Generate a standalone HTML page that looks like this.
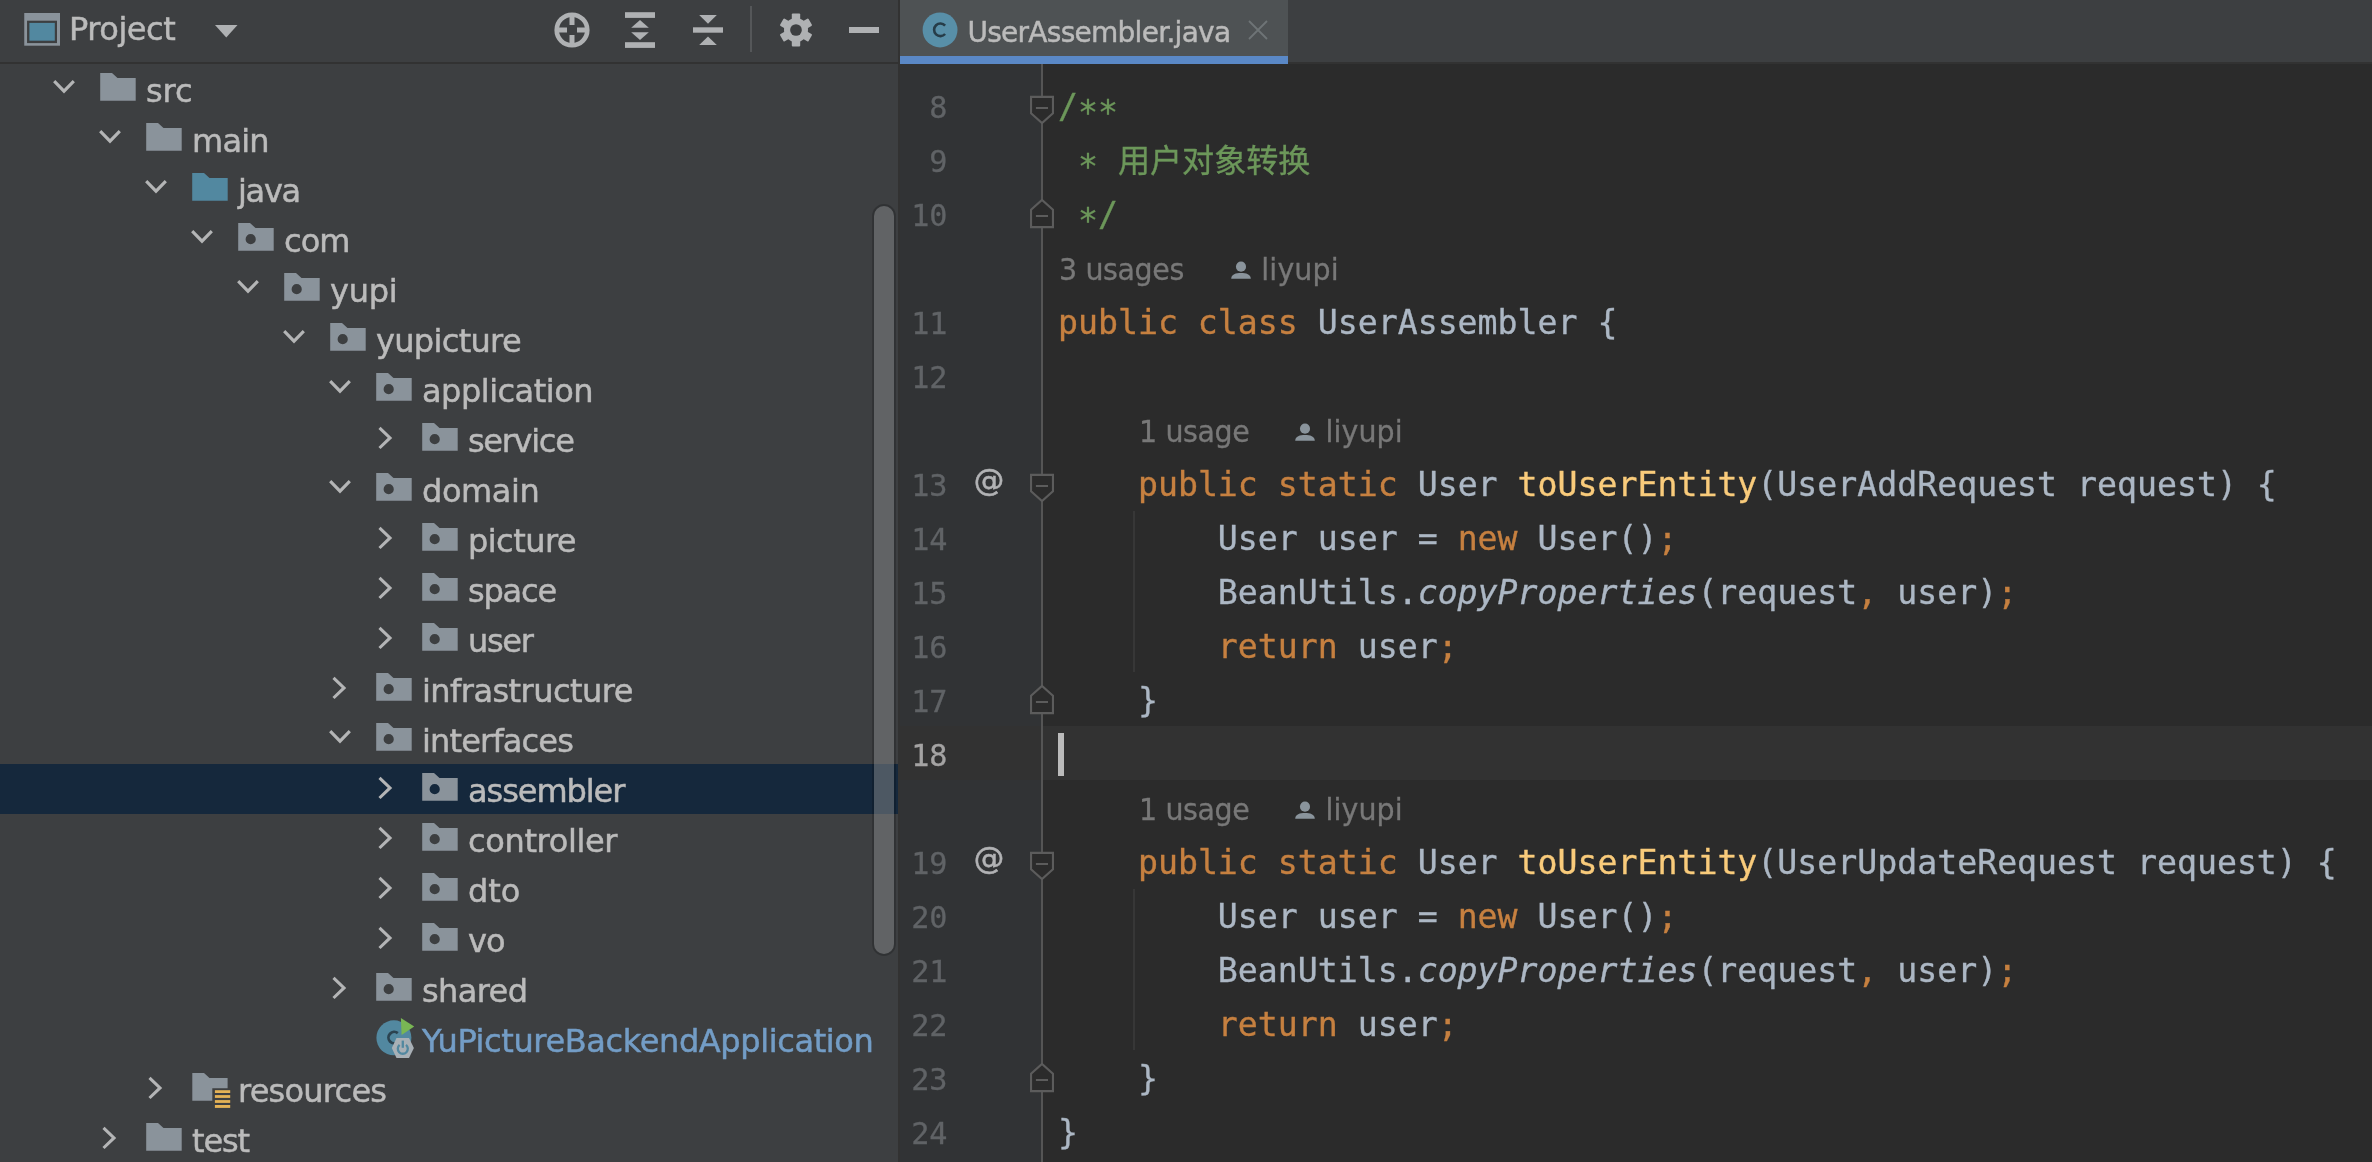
<!DOCTYPE html>
<html lang="en">
<head>
<meta charset="utf-8">
<title>UserAssembler.java</title>
<style>
*{box-sizing:border-box;margin:0;padding:0}
html,body{width:2372px;height:1162px;overflow:hidden;background:#2b2b2b}
body{position:relative;font-family:"DejaVu Sans", "Liberation Sans", "Noto Sans CJK SC", sans-serif;color:#bbbbbb;-webkit-font-smoothing:antialiased}
#root{position:absolute;left:0;top:0;width:2372px;height:1162px;will-change:transform}
.abs{position:absolute}
#panel{position:absolute;left:0;top:0;width:898px;height:1162px;background:#3d3f41;overflow:hidden}
#phead{position:absolute;left:0;top:0;width:898px;height:62px;background:#3d3f41}
#pborder{position:absolute;left:0;top:62px;width:898px;height:2px;background:#323232}
#divider{position:absolute;left:898px;top:0;width:2px;height:1162px;background:#323232}
#ptitle{-webkit-text-stroke:0.5px;position:absolute;left:69px;top:9px;font-size:32px;line-height:40px;letter-spacing:-0.45px;color:#bbbbbb;white-space:nowrap}
.row{position:absolute;left:0;width:898px;height:50px}
#selrow{position:absolute;left:0;top:764px;width:898px;height:50px;background:#15283c}
.row span{position:absolute;display:block}
.row .i{top:8px}
.row .ico{position:absolute;left:0;top:0}
.row .arw{position:absolute;left:0;top:0}
.row .t{-webkit-text-stroke:0.5px;top:4px;font-size:32px;line-height:44px;white-space:nowrap;color:#bbbbbb}
.row .t.link{color:#739dc6}
#sb{position:absolute;left:874px;top:206px;width:20px;height:747.6px;border-radius:10px;background:rgba(134,136,138,0.5);box-shadow:0 0 0 1.9px rgba(0,0,0,0.2)}
#tabs{position:absolute;left:900px;top:0;width:1472px;height:62px;background:#3d3f41}
#tabsb{position:absolute;left:900px;top:62px;width:1472px;height:2px;background:#323232}
#tab{position:absolute;left:900px;top:0;width:388px;height:56px;background:#4e5254}
#tabul{position:absolute;left:900px;top:56px;width:388px;height:8px;background:#5a88c6}
#tabt{-webkit-text-stroke:0.45px;position:absolute;left:967.4px;top:13.2px;font-size:28px;line-height:40px;letter-spacing:-0.72px;color:#bbbbbb;white-space:nowrap}
#gutter{position:absolute;left:900px;top:64px;width:141px;height:1098px;background:#313335}
#foldline{z-index:1;position:absolute;left:1041px;top:64px;width:2px;height:1098px;background:#555555}
.ln{-webkit-text-stroke:0.3px;position:absolute;left:900px;width:47.5px;height:54px;line-height:54px;text-align:right;font-family:"DejaVu Sans Mono", "Liberation Mono", "Noto Sans CJK SC", monospace;font-size:30.2px;color:#606366;white-space:pre}
.ln.cur{color:#a4a3a3}
.cl{-webkit-text-stroke:0.35px;position:absolute;left:1058px;height:54px;line-height:54px;font-family:"DejaVu Sans Mono", "Liberation Mono", "Noto Sans CJK SC", monospace;font-size:33.2px;color:#acb7c4;white-space:pre;margin:0}
.as{position:relative;top:6px}.cjk{font-size:32.1px}
.k{color:#c68040}.p{color:#acb7c4}.f{color:#f9cb7b}.cm{color:#6c975a}.it{font-style:italic;color:#acb7c4}
.curline{position:absolute;left:900px;width:1472px;height:54px;background:#323232}
.caret{position:absolute;left:1058px;width:6px;height:43px;background:#bbbbbb}
.fm{z-index:2;position:absolute;left:1028px;width:28px;height:34px}
.fm svg{display:block}
.at{-webkit-text-stroke:0.55px;position:absolute;left:970px;width:38px;height:54px;line-height:50px;text-align:center;font-size:30.5px;color:#b2b3b5;font-family:"DejaVu Sans", "Liberation Sans", "Noto Sans CJK SC", sans-serif}
.hint{-webkit-text-stroke:0.3px;position:absolute;height:54px;line-height:54px;font-size:28.5px;color:#787878;white-space:nowrap;letter-spacing:-0.4px}
.hint .person{display:inline-block;vertical-align:-2.2px;margin:0 9px 0 45px}
.hint .ha{letter-spacing:0.1px}
.hint .hu,.hint .ha{display:inline-block;transform:scaleY(1.075);transform-origin:0 68.2%}
.hint.first .person{margin-left:46.5px}
.guide{position:absolute;left:1133px;width:2px;background:#373737}
</style>
</head>
<body>
<div id="root">
<div id="panel">
<div id="phead">
<svg class="abs" style="left:24px;top:13px" width="36" height="33" viewBox="0 0 36 33"><rect x="0.25" y="0" width="35.75" height="32.7" fill="#8a939b"/><rect x="3.05" y="7.7" width="29.95" height="22.4" fill="#3d3f41"/><rect x="5.4" y="9.9" width="25.4" height="17.8" fill="#5288a0"/></svg>
<div id="ptitle">Project</div>
<svg class="abs" style="left:215px;top:25px" width="23" height="13" viewBox="0 0 23 13"><path d="M0 0H22.5L11.25 12.5Z" fill="#afb1b3"/></svg>
<svg class="abs" style="left:553px;top:11px" width="38" height="38" viewBox="0 0 38 38"><circle cx="19" cy="19" r="15.3" fill="none" stroke="#afb1b3" stroke-width="4.6"/><path d="M19 3V14M19 24V35M3 19H14M24 19H35" stroke="#afb1b3" stroke-width="5" fill="none"/></svg>
<svg class="abs" style="left:624px;top:12px" width="32" height="36" viewBox="0 0 32 36"><g fill="#afb1b3"><rect x="1" y="0.2" width="30" height="5.7"/><rect x="1" y="30.2" width="30" height="5.7"/><path d="M16 8L24.8 15.8H7.2Z"/><path d="M16 28L24.8 20.2H7.2Z"/></g></svg>
<svg class="abs" style="left:692px;top:14px" width="32" height="32" viewBox="0 0 32 32"><g fill="#afb1b3"><rect x="1" y="13.3" width="30" height="5.4"/><path d="M16 9.8L24.8 1H7.2Z"/><path d="M16 22.6L24.8 31H7.2Z"/></g></svg>
<div class="abs" style="left:750px;top:6px;width:2px;height:46px;background:#555759"></div>
<svg class="abs" style="left:778px;top:12px" width="36" height="36" viewBox="-18 -18 36 36"><g fill="#afb1b3"><circle r="12"/><g id="teeth"><rect x="-4.2" y="-16.4" width="8.4" height="32.8" rx="1"/><rect x="-4.2" y="-16.4" width="8.4" height="32.8" rx="1" transform="rotate(60)"/><rect x="-4.2" y="-16.4" width="8.4" height="32.8" rx="1" transform="rotate(120)"/></g></g><circle r="5.85" fill="#3d3f41"/></svg>
<div class="abs" style="left:849px;top:27.1px;width:30.2px;height:5.7px;background:#afb1b3"></div>
</div>
<div id="pborder"></div>
<div id="selrow"></div>
<div class="row" style="top:65px"><span class="a" style="left:50.7px;top:13px"><svg class="arw" width="26" height="18" viewBox="0 0 26 18"><path d="M3.2 3.2L13 13.2L22.8 3.2" fill="none" stroke="#b4b5b6" stroke-width="3.1"/></svg></span><span class="i" style="left:100px"><svg class="ico" width="36" height="28" viewBox="0 0 36 28"><path d="M0.2 0H12L17.5 4.9H35.7V27.8H0.2Z" fill="#8a939b"/></svg></span><span class="t" style="left:146px;letter-spacing:-0.1px">src</span></div>
<div class="row" style="top:115px"><span class="a" style="left:96.7px;top:13px"><svg class="arw" width="26" height="18" viewBox="0 0 26 18"><path d="M3.2 3.2L13 13.2L22.8 3.2" fill="none" stroke="#b4b5b6" stroke-width="3.1"/></svg></span><span class="i" style="left:146px"><svg class="ico" width="36" height="28" viewBox="0 0 36 28"><path d="M0.2 0H12L17.5 4.9H35.7V27.8H0.2Z" fill="#8a939b"/></svg></span><span class="t" style="left:192px;letter-spacing:-0.767px">main</span></div>
<div class="row" style="top:165px"><span class="a" style="left:142.7px;top:13px"><svg class="arw" width="26" height="18" viewBox="0 0 26 18"><path d="M3.2 3.2L13 13.2L22.8 3.2" fill="none" stroke="#b4b5b6" stroke-width="3.1"/></svg></span><span class="i" style="left:192px"><svg class="ico" width="36" height="28" viewBox="0 0 36 28"><path d="M0.2 0H12L17.5 4.9H35.7V27.8H0.2Z" fill="#5288a0"/></svg></span><span class="t" style="left:238px;letter-spacing:-1.3px">java</span></div>
<div class="row" style="top:215px"><span class="a" style="left:188.7px;top:13px"><svg class="arw" width="26" height="18" viewBox="0 0 26 18"><path d="M3.2 3.2L13 13.2L22.8 3.2" fill="none" stroke="#b4b5b6" stroke-width="3.1"/></svg></span><span class="i" style="left:238px"><svg class="ico" width="36" height="28" viewBox="0 0 36 28"><path fill-rule="evenodd" d="M0.2 0H12L17.5 4.9H35.7V27.8H0.2ZM17.8 16.2a5.1 5.1 0 1 0 -10.2 0a5.1 5.1 0 1 0 10.2 0Z" fill="#8a939b"/></svg></span><span class="t" style="left:284px;letter-spacing:-0.9px">com</span></div>
<div class="row" style="top:265px"><span class="a" style="left:234.7px;top:13px"><svg class="arw" width="26" height="18" viewBox="0 0 26 18"><path d="M3.2 3.2L13 13.2L22.8 3.2" fill="none" stroke="#b4b5b6" stroke-width="3.1"/></svg></span><span class="i" style="left:284px"><svg class="ico" width="36" height="28" viewBox="0 0 36 28"><path fill-rule="evenodd" d="M0.2 0H12L17.5 4.9H35.7V27.8H0.2ZM17.8 16.2a5.1 5.1 0 1 0 -10.2 0a5.1 5.1 0 1 0 10.2 0Z" fill="#8a939b"/></svg></span><span class="t" style="left:330px;letter-spacing:-0.233px">yupi</span></div>
<div class="row" style="top:315px"><span class="a" style="left:280.7px;top:13px"><svg class="arw" width="26" height="18" viewBox="0 0 26 18"><path d="M3.2 3.2L13 13.2L22.8 3.2" fill="none" stroke="#b4b5b6" stroke-width="3.1"/></svg></span><span class="i" style="left:330px"><svg class="ico" width="36" height="28" viewBox="0 0 36 28"><path fill-rule="evenodd" d="M0.2 0H12L17.5 4.9H35.7V27.8H0.2ZM17.8 16.2a5.1 5.1 0 1 0 -10.2 0a5.1 5.1 0 1 0 10.2 0Z" fill="#8a939b"/></svg></span><span class="t" style="left:376px;letter-spacing:-0.6755px">yupicture</span></div>
<div class="row" style="top:365px"><span class="a" style="left:326.7px;top:13px"><svg class="arw" width="26" height="18" viewBox="0 0 26 18"><path d="M3.2 3.2L13 13.2L22.8 3.2" fill="none" stroke="#b4b5b6" stroke-width="3.1"/></svg></span><span class="i" style="left:376px"><svg class="ico" width="36" height="28" viewBox="0 0 36 28"><path fill-rule="evenodd" d="M0.2 0H12L17.5 4.9H35.7V27.8H0.2ZM17.8 16.2a5.1 5.1 0 1 0 -10.2 0a5.1 5.1 0 1 0 10.2 0Z" fill="#8a939b"/></svg></span><span class="t" style="left:422px;letter-spacing:-0.5px">application</span></div>
<div class="row" style="top:415px"><span class="a" style="left:375.5px;top:9.8px"><svg class="arw r" width="18" height="26" viewBox="0 0 18 26"><path d="M3.5 2.8L14 12.9L3.5 23" fill="none" stroke="#b4b5b6" stroke-width="3.1"/></svg></span><span class="i" style="left:422px"><svg class="ico" width="36" height="28" viewBox="0 0 36 28"><path fill-rule="evenodd" d="M0.2 0H12L17.5 4.9H35.7V27.8H0.2ZM17.8 16.2a5.1 5.1 0 1 0 -10.2 0a5.1 5.1 0 1 0 10.2 0Z" fill="#8a939b"/></svg></span><span class="t" style="left:468px;letter-spacing:-1.3px">service</span></div>
<div class="row" style="top:465px"><span class="a" style="left:326.7px;top:13px"><svg class="arw" width="26" height="18" viewBox="0 0 26 18"><path d="M3.2 3.2L13 13.2L22.8 3.2" fill="none" stroke="#b4b5b6" stroke-width="3.1"/></svg></span><span class="i" style="left:376px"><svg class="ico" width="36" height="28" viewBox="0 0 36 28"><path fill-rule="evenodd" d="M0.2 0H12L17.5 4.9H35.7V27.8H0.2ZM17.8 16.2a5.1 5.1 0 1 0 -10.2 0a5.1 5.1 0 1 0 10.2 0Z" fill="#8a939b"/></svg></span><span class="t" style="left:422px;letter-spacing:-0.4px">domain</span></div>
<div class="row" style="top:515px"><span class="a" style="left:375.5px;top:9.8px"><svg class="arw r" width="18" height="26" viewBox="0 0 18 26"><path d="M3.5 2.8L14 12.9L3.5 23" fill="none" stroke="#b4b5b6" stroke-width="3.1"/></svg></span><span class="i" style="left:422px"><svg class="ico" width="36" height="28" viewBox="0 0 36 28"><path fill-rule="evenodd" d="M0.2 0H12L17.5 4.9H35.7V27.8H0.2ZM17.8 16.2a5.1 5.1 0 1 0 -10.2 0a5.1 5.1 0 1 0 10.2 0Z" fill="#8a939b"/></svg></span><span class="t" style="left:468px;letter-spacing:-0.55px">picture</span></div>
<div class="row" style="top:565px"><span class="a" style="left:375.5px;top:9.8px"><svg class="arw r" width="18" height="26" viewBox="0 0 18 26"><path d="M3.5 2.8L14 12.9L3.5 23" fill="none" stroke="#b4b5b6" stroke-width="3.1"/></svg></span><span class="i" style="left:422px"><svg class="ico" width="36" height="28" viewBox="0 0 36 28"><path fill-rule="evenodd" d="M0.2 0H12L17.5 4.9H35.7V27.8H0.2ZM17.8 16.2a5.1 5.1 0 1 0 -10.2 0a5.1 5.1 0 1 0 10.2 0Z" fill="#8a939b"/></svg></span><span class="t" style="left:468px;letter-spacing:-1.2px">space</span></div>
<div class="row" style="top:615px"><span class="a" style="left:375.5px;top:9.8px"><svg class="arw r" width="18" height="26" viewBox="0 0 18 26"><path d="M3.5 2.8L14 12.9L3.5 23" fill="none" stroke="#b4b5b6" stroke-width="3.1"/></svg></span><span class="i" style="left:422px"><svg class="ico" width="36" height="28" viewBox="0 0 36 28"><path fill-rule="evenodd" d="M0.2 0H12L17.5 4.9H35.7V27.8H0.2ZM17.8 16.2a5.1 5.1 0 1 0 -10.2 0a5.1 5.1 0 1 0 10.2 0Z" fill="#8a939b"/></svg></span><span class="t" style="left:468px;letter-spacing:-1.333px">user</span></div>
<div class="row" style="top:665px"><span class="a" style="left:329.5px;top:9.8px"><svg class="arw r" width="18" height="26" viewBox="0 0 18 26"><path d="M3.5 2.8L14 12.9L3.5 23" fill="none" stroke="#b4b5b6" stroke-width="3.1"/></svg></span><span class="i" style="left:376px"><svg class="ico" width="36" height="28" viewBox="0 0 36 28"><path fill-rule="evenodd" d="M0.2 0H12L17.5 4.9H35.7V27.8H0.2ZM17.8 16.2a5.1 5.1 0 1 0 -10.2 0a5.1 5.1 0 1 0 10.2 0Z" fill="#8a939b"/></svg></span><span class="t" style="left:422px;letter-spacing:-0.546px">infrastructure</span></div>
<div class="row" style="top:715px"><span class="a" style="left:326.7px;top:13px"><svg class="arw" width="26" height="18" viewBox="0 0 26 18"><path d="M3.2 3.2L13 13.2L22.8 3.2" fill="none" stroke="#b4b5b6" stroke-width="3.1"/></svg></span><span class="i" style="left:376px"><svg class="ico" width="36" height="28" viewBox="0 0 36 28"><path fill-rule="evenodd" d="M0.2 0H12L17.5 4.9H35.7V27.8H0.2ZM17.8 16.2a5.1 5.1 0 1 0 -10.2 0a5.1 5.1 0 1 0 10.2 0Z" fill="#8a939b"/></svg></span><span class="t" style="left:422px;letter-spacing:-0.833px">interfaces</span></div>
<div class="row sel" style="top:765px"><span class="a" style="left:375.5px;top:9.8px"><svg class="arw r" width="18" height="26" viewBox="0 0 18 26"><path d="M3.5 2.8L14 12.9L3.5 23" fill="none" stroke="#b4b5b6" stroke-width="3.1"/></svg></span><span class="i" style="left:422px"><svg class="ico" width="36" height="28" viewBox="0 0 36 28"><path fill-rule="evenodd" d="M0.2 0H12L17.5 4.9H35.7V27.8H0.2ZM17.8 16.2a5.1 5.1 0 1 0 -10.2 0a5.1 5.1 0 1 0 10.2 0Z" fill="#8a939b"/></svg></span><span class="t" style="left:468px;letter-spacing:-1.062px">assembler</span></div>
<div class="row" style="top:815px"><span class="a" style="left:375.5px;top:9.8px"><svg class="arw r" width="18" height="26" viewBox="0 0 18 26"><path d="M3.5 2.8L14 12.9L3.5 23" fill="none" stroke="#b4b5b6" stroke-width="3.1"/></svg></span><span class="i" style="left:422px"><svg class="ico" width="36" height="28" viewBox="0 0 36 28"><path fill-rule="evenodd" d="M0.2 0H12L17.5 4.9H35.7V27.8H0.2ZM17.8 16.2a5.1 5.1 0 1 0 -10.2 0a5.1 5.1 0 1 0 10.2 0Z" fill="#8a939b"/></svg></span><span class="t" style="left:468px;letter-spacing:-0.356px">controller</span></div>
<div class="row" style="top:865px"><span class="a" style="left:375.5px;top:9.8px"><svg class="arw r" width="18" height="26" viewBox="0 0 18 26"><path d="M3.5 2.8L14 12.9L3.5 23" fill="none" stroke="#b4b5b6" stroke-width="3.1"/></svg></span><span class="i" style="left:422px"><svg class="ico" width="36" height="28" viewBox="0 0 36 28"><path fill-rule="evenodd" d="M0.2 0H12L17.5 4.9H35.7V27.8H0.2ZM17.8 16.2a5.1 5.1 0 1 0 -10.2 0a5.1 5.1 0 1 0 10.2 0Z" fill="#8a939b"/></svg></span><span class="t" style="left:468px;letter-spacing:-0.05px">dto</span></div>
<div class="row" style="top:915px"><span class="a" style="left:375.5px;top:9.8px"><svg class="arw r" width="18" height="26" viewBox="0 0 18 26"><path d="M3.5 2.8L14 12.9L3.5 23" fill="none" stroke="#b4b5b6" stroke-width="3.1"/></svg></span><span class="i" style="left:422px"><svg class="ico" width="36" height="28" viewBox="0 0 36 28"><path fill-rule="evenodd" d="M0.2 0H12L17.5 4.9H35.7V27.8H0.2ZM17.8 16.2a5.1 5.1 0 1 0 -10.2 0a5.1 5.1 0 1 0 10.2 0Z" fill="#8a939b"/></svg></span><span class="t" style="left:468px;letter-spacing:-1.0px">vo</span></div>
<div class="row" style="top:965px"><span class="a" style="left:329.5px;top:9.8px"><svg class="arw r" width="18" height="26" viewBox="0 0 18 26"><path d="M3.5 2.8L14 12.9L3.5 23" fill="none" stroke="#b4b5b6" stroke-width="3.1"/></svg></span><span class="i" style="left:376px"><svg class="ico" width="36" height="28" viewBox="0 0 36 28"><path fill-rule="evenodd" d="M0.2 0H12L17.5 4.9H35.7V27.8H0.2ZM17.8 16.2a5.1 5.1 0 1 0 -10.2 0a5.1 5.1 0 1 0 10.2 0Z" fill="#8a939b"/></svg></span><span class="t" style="left:422px;letter-spacing:-0.6px">shared</span></div>
<div class="row" style="top:1015px"><span class="i" style="left:376px"><svg class="ico" style="top:-6px" width="40" height="44" viewBox="0 0 40 44"><circle cx="17.9" cy="20.8" r="17.5" fill="#5288a0"/><path d="M21.8 16.2A5.7 5.7 0 1 0 21.8 25" fill="none" stroke="#2b4350" stroke-width="2.8"/><path d="M24.9 1L38.2 9.6L25.6 18Z" fill="#79b654"/><path d="M15.8 31L20.5 21H33L37.9 31L33 41H20.5Z" fill="#a8b0b6"/><path d="M23.6 27.9A5 5 0 1 0 30 27.9" fill="none" stroke="#5288a0" stroke-width="2.3"/><path d="M26.8 23.6V30.8" fill="none" stroke="#5288a0" stroke-width="2.3"/></svg></span><span class="t link" style="left:422px;letter-spacing:-0.38676923076923075px">YuPictureBackendApplication</span></div>
<div class="row" style="top:1065px"><span class="a" style="left:145.5px;top:9.8px"><svg class="arw r" width="18" height="26" viewBox="0 0 18 26"><path d="M3.5 2.8L14 12.9L3.5 23" fill="none" stroke="#b4b5b6" stroke-width="3.1"/></svg></span><span class="i" style="left:192px"><svg class="ico" width="40" height="36" viewBox="0 0 40 36"><path d="M0.3 0H12L17.5 4.9H35.6V15.2H20.3V27.7H0.3Z" fill="#8a939b"/><g fill="#e4b256"><rect x="22.9" y="17.2" width="15.3" height="2.8"/><rect x="22.9" y="22.1" width="15.3" height="2.8"/><rect x="22.9" y="27.1" width="15.3" height="2.8"/><rect x="22.9" y="32" width="15.3" height="2.9"/></g></svg></span><span class="t" style="left:238px;letter-spacing:-0.762px">resources</span></div>
<div class="row" style="top:1115px"><span class="a" style="left:99.5px;top:9.8px"><svg class="arw r" width="18" height="26" viewBox="0 0 18 26"><path d="M3.5 2.8L14 12.9L3.5 23" fill="none" stroke="#b4b5b6" stroke-width="3.1"/></svg></span><span class="i" style="left:146px"><svg class="ico" width="36" height="28" viewBox="0 0 36 28"><path d="M0.2 0H12L17.5 4.9H35.7V27.8H0.2Z" fill="#8a939b"/></svg></span><span class="t" style="left:192px;letter-spacing:-1.1663333333333332px">test</span></div>
<div id="sb"></div>
</div>
<div id="divider"></div>
<div id="tabs"></div>
<div id="tabsb"></div>
<div id="tab"></div>
<div id="tabul"></div>
<svg class="abs" style="left:922px;top:12px" width="36" height="36" viewBox="0 0 36 36"><circle cx="18.05" cy="17.95" r="17.45" fill="#588fa8"/><path d="M23.1 13.6A6.3 6.3 0 1 0 23.1 22" fill="none" stroke="#263c48" stroke-width="2.6"/></svg>
<div id="tabt">UserAssembler.java</div>
<svg class="abs" style="left:1248px;top:20px" width="20" height="20" viewBox="0 0 20 20"><path d="M1 1L19 19M19 1L1 19" stroke="#6e7476" stroke-width="1.8" fill="none"/></svg>
<div id="gutter"></div>
<div id="foldline"></div>
<div class="guide" style="top:511px;height:161px"></div>
<div class="guide" style="top:889px;height:161px"></div>
<div class="ln" style="top:80.5px">8</div>
<div class="fm" style="top:93px"><svg class="fold" width="28" height="34" viewBox="0 0 28 34"><path d="M3.05 3.9H24.95V20.2L14 30.1L3.05 20.2Z" fill="#2b2b2b" stroke="#5c5c5c" stroke-width="2.1"/><path d="M7.9 15H20" stroke="#5c5c5c" stroke-width="2"/></svg></div>
<pre class="cl" style="top:80px"><span class="cm">/<span class="as">**</span></span></pre>
<div class="ln" style="top:134.5px">9</div>
<pre class="cl" style="top:134px"><span class="cm"> <span class="as">*</span> <span class="cjk">用户对象转换</span></span></pre>
<div class="ln" style="top:188.5px">10</div>
<div class="fm" style="top:197px"><svg class="fold" width="28" height="34" viewBox="0 0 28 34"><path d="M3.05 30.1H24.95V12.8L14 2.9L3.05 12.8Z" fill="#2b2b2b" stroke="#5c5c5c" stroke-width="2.1"/><path d="M7.9 19H20" stroke="#5c5c5c" stroke-width="2"/></svg></div>
<pre class="cl" style="top:188px"><span class="cm"> <span class="as">*</span>/</span></pre>
<div class="hint first" style="top:243.8px;left:1059px"><span class="hu">3 usages</span><svg class="person" width="22" height="22" viewBox="0 0 22 22"><circle cx="11" cy="6.65" r="5.05" fill="#8a949c"/><path d="M1.2 18.8C1.2 14 6 12.9 11 12.9C16 12.9 20.8 14 20.8 18.8Z" fill="#8a949c"/></svg><span class="ha">liyupi</span></div>
<div class="ln" style="top:296.5px">11</div>
<pre class="cl" style="top:296px"><span class="k">public class </span><span class="p">UserAssembler {</span></pre>
<div class="ln" style="top:350.5px">12</div>
<div class="hint" style="top:405.8px;left:1139px"><span class="hu">1 usage</span><svg class="person" width="22" height="22" viewBox="0 0 22 22"><circle cx="11" cy="6.65" r="5.05" fill="#8a949c"/><path d="M1.2 18.8C1.2 14 6 12.9 11 12.9C16 12.9 20.8 14 20.8 18.8Z" fill="#8a949c"/></svg><span class="ha">liyupi</span></div>
<div class="ln" style="top:458.5px">13</div>
<div class="fm" style="top:471px"><svg class="fold" width="28" height="34" viewBox="0 0 28 34"><path d="M3.05 3.9H24.95V20.2L14 30.1L3.05 20.2Z" fill="#2b2b2b" stroke="#5c5c5c" stroke-width="2.1"/><path d="M7.9 15H20" stroke="#5c5c5c" stroke-width="2"/></svg></div>
<div class="at" style="top:456px">@</div>
<pre class="cl" style="top:458px"><span class="p">    </span><span class="k">public static </span><span class="p">User </span><span class="f">toUserEntity</span><span class="p">(UserAddRequest request) {</span></pre>
<div class="ln" style="top:512.5px">14</div>
<pre class="cl" style="top:512px"><span class="p">        User user = </span><span class="k">new </span><span class="p">User()</span><span class="k">;</span></pre>
<div class="ln" style="top:566.5px">15</div>
<pre class="cl" style="top:566px"><span class="p">        BeanUtils.</span><span class="it">copyProperties</span><span class="p">(request</span><span class="k">,</span><span class="p"> user)</span><span class="k">;</span></pre>
<div class="ln" style="top:620.5px">16</div>
<pre class="cl" style="top:620px"><span class="p">        </span><span class="k">return </span><span class="p">user</span><span class="k">;</span></pre>
<div class="ln" style="top:674.5px">17</div>
<div class="fm" style="top:683px"><svg class="fold" width="28" height="34" viewBox="0 0 28 34"><path d="M3.05 30.1H24.95V12.8L14 2.9L3.05 12.8Z" fill="#2b2b2b" stroke="#5c5c5c" stroke-width="2.1"/><path d="M7.9 19H20" stroke="#5c5c5c" stroke-width="2"/></svg></div>
<pre class="cl" style="top:674px"><span class="p">    }</span></pre>
<div class="curline" style="top:726px"></div><div class="caret" style="top:733px"></div>
<div class="ln cur" style="top:728.5px">18</div>
<div class="hint" style="top:783.8px;left:1139px"><span class="hu">1 usage</span><svg class="person" width="22" height="22" viewBox="0 0 22 22"><circle cx="11" cy="6.65" r="5.05" fill="#8a949c"/><path d="M1.2 18.8C1.2 14 6 12.9 11 12.9C16 12.9 20.8 14 20.8 18.8Z" fill="#8a949c"/></svg><span class="ha">liyupi</span></div>
<div class="ln" style="top:836.5px">19</div>
<div class="fm" style="top:849px"><svg class="fold" width="28" height="34" viewBox="0 0 28 34"><path d="M3.05 3.9H24.95V20.2L14 30.1L3.05 20.2Z" fill="#2b2b2b" stroke="#5c5c5c" stroke-width="2.1"/><path d="M7.9 15H20" stroke="#5c5c5c" stroke-width="2"/></svg></div>
<div class="at" style="top:834px">@</div>
<pre class="cl" style="top:836px"><span class="p">    </span><span class="k">public static </span><span class="p">User </span><span class="f">toUserEntity</span><span class="p">(UserUpdateRequest request) {</span></pre>
<div class="ln" style="top:890.5px">20</div>
<pre class="cl" style="top:890px"><span class="p">        User user = </span><span class="k">new </span><span class="p">User()</span><span class="k">;</span></pre>
<div class="ln" style="top:944.5px">21</div>
<pre class="cl" style="top:944px"><span class="p">        BeanUtils.</span><span class="it">copyProperties</span><span class="p">(request</span><span class="k">,</span><span class="p"> user)</span><span class="k">;</span></pre>
<div class="ln" style="top:998.5px">22</div>
<pre class="cl" style="top:998px"><span class="p">        </span><span class="k">return </span><span class="p">user</span><span class="k">;</span></pre>
<div class="ln" style="top:1052.5px">23</div>
<div class="fm" style="top:1061px"><svg class="fold" width="28" height="34" viewBox="0 0 28 34"><path d="M3.05 30.1H24.95V12.8L14 2.9L3.05 12.8Z" fill="#2b2b2b" stroke="#5c5c5c" stroke-width="2.1"/><path d="M7.9 19H20" stroke="#5c5c5c" stroke-width="2"/></svg></div>
<pre class="cl" style="top:1052px"><span class="p">    }</span></pre>
<div class="ln" style="top:1106.5px">24</div>
<pre class="cl" style="top:1106px"><span class="p">}</span></pre>
</div>
</body>
</html>
